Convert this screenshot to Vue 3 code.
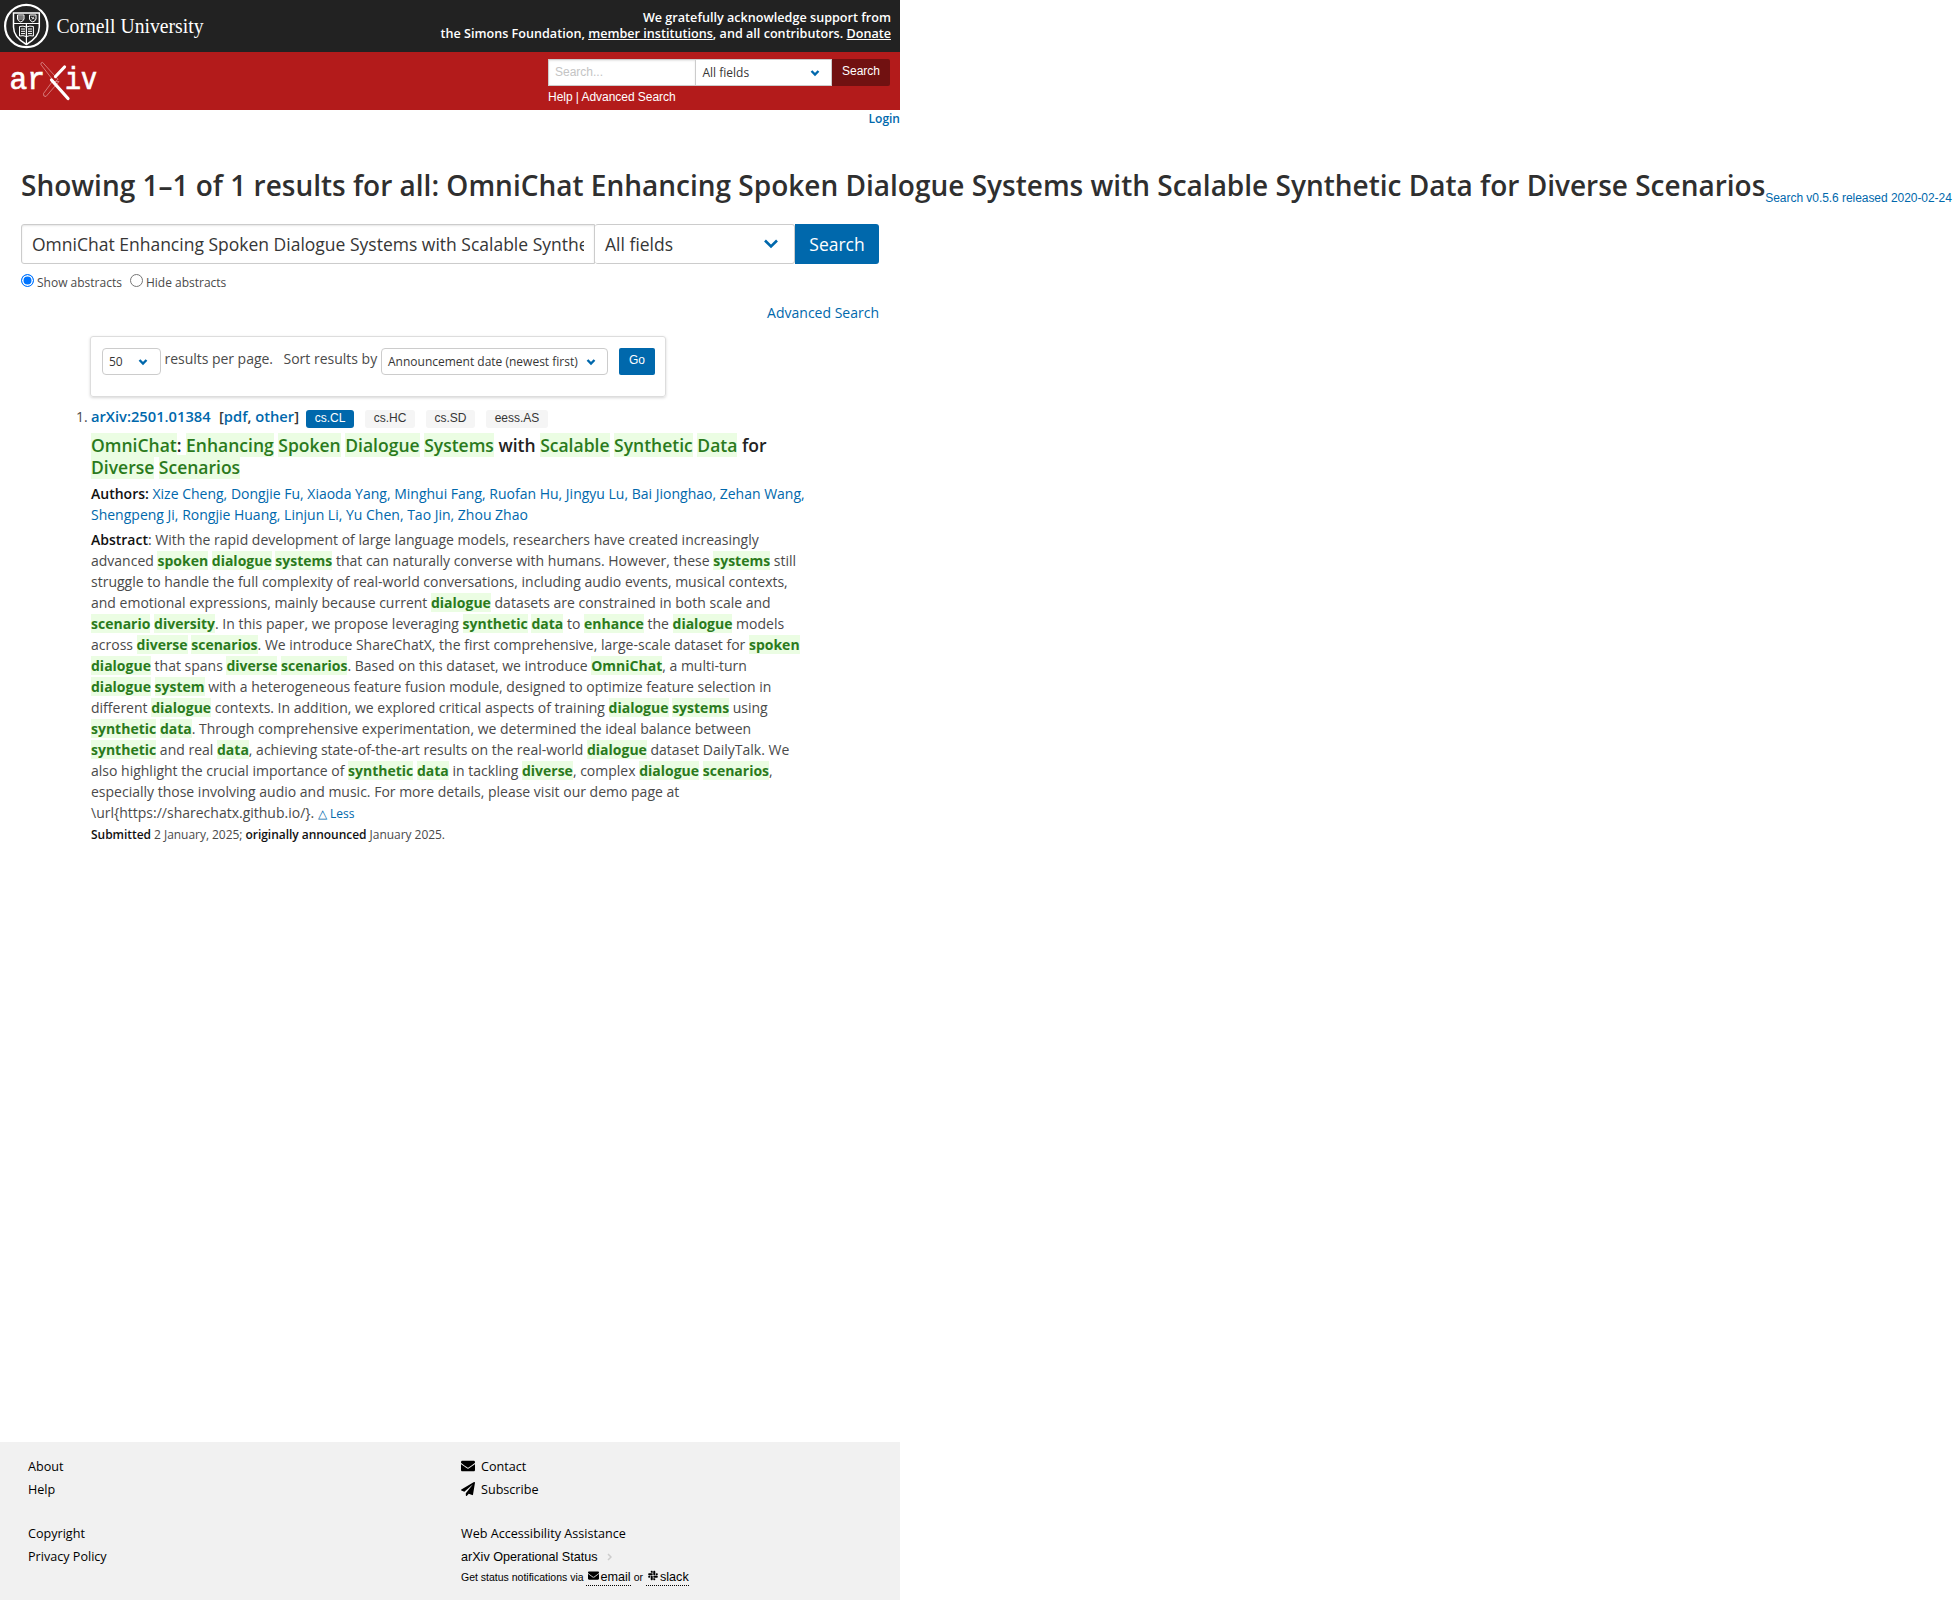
<script setup>
const parse = (line) =>
  line.split(/(\*[^*]+\*)/).filter(Boolean).map((t) =>
    t[0] === '*' ? { hit: true, text: t.slice(1, -1) } : { hit: false, text: t }
  )

// Words between asterisks are search hits.
const title = [
  '*OmniChat*: *Enhancing* *Spoken* *Dialogue* *Systems* with *Scalable* *Synthetic* *Data* for',
  '*Diverse* *Scenarios*',
].map(parse)

const authors = [
  ['Xize Cheng', 'Dongjie Fu', 'Xiaoda Yang', 'Minghui Fang', 'Ruofan Hu', 'Jingyu Lu', 'Bai Jionghao', 'Zehan Wang'],
  ['Shengpeng Ji', 'Rongjie Huang', 'Linjun Li', 'Yu Chen', 'Tao Jin', 'Zhou Zhao'],
]

const abstract = [
  ': With the rapid development of large language models, researchers have created increasingly',
  'advanced *spoken* *dialogue* *systems* that can naturally converse with humans. However, these *systems* still',
  'struggle to handle the full complexity of real-world conversations, including audio events, musical contexts,',
  'and emotional expressions, mainly because current *dialogue* datasets are constrained in both scale and',
  '*scenario* *diversity*. In this paper, we propose leveraging *synthetic* *data* to *enhance* the *dialogue* models',
  'across *diverse* *scenarios*. We introduce ShareChatX, the first comprehensive, large-scale dataset for *spoken*',
  '*dialogue* that spans *diverse* *scenarios*. Based on this dataset, we introduce *OmniChat*, a multi-turn',
  '*dialogue* *system* with a heterogeneous feature fusion module, designed to optimize feature selection in',
  'different *dialogue* contexts. In addition, we explored critical aspects of training *dialogue* *systems* using',
  '*synthetic* *data*. Through comprehensive experimentation, we determined the ideal balance between',
  '*synthetic* and real *data*, achieving state-of-the-art results on the real-world *dialogue* dataset DailyTalk. We',
  'also highlight the crucial importance of *synthetic* *data* in tackling *diverse*, complex *dialogue* *scenarios*,',
  'especially those involving audio and music. For more details, please visit our demo page at',
  '\\url{https://sharechatx.github.io/}. ',
].map(parse)

const tags = ['cs.CL', 'cs.HC', 'cs.SD', 'eess.AS']
</script>

<template>
  <div class="page">
    <header>
      <div class="cornell">
        <svg class="seal" width="210" height="52" viewBox="0 0 210 52">
          <circle cx="26.300" cy="26" r="21.200" fill="none" stroke="#fff" stroke-width="2.200" />
          <path d="M13.500 13h25.800v14c0 8-5 13-12.900 17.500C18.500 40 13.500 35 13.500 27z" fill="none" stroke="#fff" stroke-width="1.500" />
          <path d="M13.500 23.500h25.800M26.400 24v20" stroke="#fff" stroke-width="1.200" />
          <path d="M17.500 15h6.500v4q-.5 2-3.200 3-2.800-1-3.300-3zM29.500 15h6.500v4q-.5 2-3.200 3-2.800-1-3.300-3z" fill="none" stroke="#fff" />
          <path d="M18 17h5.500M18 19h5.500M31 17l3.500 2M34 16.500l-2 3" stroke="#fff" stroke-width=".8" />
          <path d="M19.500 26.500q3.500-1 6.900.5 3.400-1.500 7-.5v9.500q-3.600-1-7 .6-3.400-1.600-6.900-.6z" fill="none" stroke="#fff" />
          <path d="M21 29h4M21 31.300h4M21 33.600h4M28 29h4M28 31.300h4M28 33.600h4" stroke="#fff" />
          <text x="56.500" y="33" textLength="147" lengthAdjust="spacingAndGlyphs" class="wordmark">Cornell University</text>
        </svg>
        <div class="support">
          <span>We gratefully acknowledge support from</span><br>
          <span>the Simons Foundation, <a>member institutions</a>, and all contributors. <a>Donate</a></span>
        </div>
      </div>
      <div class="banner">
        <svg class="logo" width="100" height="58" viewBox="0 52 100 58">
          <g class="logo-text">
            <text x="9.500" y="88.500" textLength="35.500" lengthAdjust="spacingAndGlyphs">ar</text>
            <text x="65" y="88.500" textLength="32" lengthAdjust="spacingAndGlyphs">iv</text>
          </g>
          <path d="M42.500 62.300q-2.300.4-1.500 2.400l13.500 17.500 3.500-2.800zM52 82l-8.500 11.500q-.5 3.500 2.500 3l13-15z" fill="none" stroke="#e3a0a0" stroke-width=".7" />
          <path d="M64.500 67l-9 9.500M51.500 80l16.500 18.500" fill="none" stroke="#fff" stroke-width="3.200" stroke-linecap="round" />
        </svg>
        <div class="mini">
          <div class="mini-row">
            <div class="mini-input">Search...</div>
            <div class="mini-select"><span>All fields</span>
              <svg width="10" height="8" viewBox="0 0 10 8"><path d="M1.500 2l3.500 3.500L8.500 2" /></svg>
            </div>
            <div class="mini-btn">Search</div>
          </div>
          <div class="help">Help | Advanced Search</div>
        </div>
      </div>
    </header>
    <div class="login">Login</div>

    <main>
      <div class="heading">
        <h1>Showing 1–1 of 1 results for all: OmniChat Enhancing Spoken Dialogue Systems with Scalable Synthetic Data for Diverse Scenarios</h1>
        <a class="version">Search v0.5.6 released 2020-02-24</a>
      </div>
      <div class="searchbar">
        <div class="query"><div class="clip">OmniChat Enhancing Spoken Dialogue Systems with Scalable Synthetic Data for Diverse Scenarios</div></div>
        <div class="field"><span>All fields</span>
          <svg width="16" height="12" viewBox="0 0 16 12"><path d="M2 2.500l6 6 6-6" /></svg>
        </div>
        <div class="go-search">Search</div>
      </div>
      <div class="radios">
        <i class="radio on"></i><span class="show">Show abstracts</span>
        <i class="radio"></i><span>Hide abstracts</span>
      </div>
      <div class="advanced"><a>Advanced Search</a></div>

      <div class="box">
        <div class="sel sel-count"><span>50</span>
          <svg width="10" height="8" viewBox="0 0 10 8"><path d="M1.500 2l3.500 3.500L8.500 2" /></svg></div>
        <span class="per-page">results per page.</span>
        <span class="sort-by">Sort results by</span>
        <div class="sel sel-sort"><span>Announcement date (newest first)</span>
          <svg width="10" height="8" viewBox="0 0 10 8"><path d="M1.500 2l3.500 3.500L8.500 2" /></svg></div>
        <div class="go">Go</div>
      </div>

      <article>
        <div class="idrow">
          <span class="num">1.</span>
          <a class="id">arXiv:2501.01384</a>
          <span class="fmt">[<a>pdf</a>, <a>other</a>]</span>
          <span class="tags"><span v-for="(t, i) in tags" :key="t" class="tag" :class="{ primary: i === 0 }">{{ t }}</span></span>
        </div>
        <div class="title">
          <div v-for="(l, i) in title" :key="i"><template v-for="(s, j) in l" :key="j"><mark v-if="s.hit">{{ s.text }}</mark><template v-else>{{ s.text }}</template></template></div>
        </div>
        <div class="authors">
          <div v-for="(row, i) in authors" :key="i"><b v-if="i === 0">Authors:</b>{{ i === 0 ? ' ' : '' }}<template v-for="(a, j) in row" :key="a"><a>{{ a }}</a>{{ j < row.length - 1 ? ', ' : i === 0 ? ',' : '' }}</template></div>
        </div>
        <div class="abstract">
          <div v-for="(l, i) in abstract" :key="i"><b v-if="i === 0">Abstract</b><template v-for="(s, j) in l" :key="j"><mark v-if="s.hit">{{ s.text }}</mark><template v-else>{{ s.text }}</template></template><a v-if="i === 13" class="less">△ Less</a></div>
        </div>
        <p class="submitted"><b>Submitted</b> 2 January, 2025; <b>originally announced</b> January 2025.</p>
      </article>
    </main>

    <footer>
      <div class="col left">
        <div>About</div>
        <div>Help</div>
        <div class="gap">Copyright</div>
        <div>Privacy Policy</div>
      </div>
      <div class="col right">
        <div><svg class="ico" width="14" height="14" viewBox="0 0 512 512"><path d="M502.300 190.800c3.900-3.100 9.700-.2 9.700 4.700V400c0 26.500-21.500 48-48 48H48c-26.500 0-48-21.500-48-48V195.600c0-5 5.700-7.800 9.700-4.700 22.400 17.400 52.100 39.500 154.100 113.600 21.100 15.400 56.700 47.800 92.200 47.600 35.700.3 72-32.800 92.300-47.600 102-74.100 131.600-96.300 154-113.700zM256 320c23.200.4 56.600-29.200 73.400-41.400 132.700-96.300 142.800-104.700 173.400-128.700 5.800-4.500 9.200-11.500 9.200-18.900v-19c0-26.500-21.500-48-48-48H48c-26.500 0-48 21.500-48 48v19c0 7.400 3.400 14.300 9.200 18.900 30.600 23.900 40.700 32.400 173.400 128.700 16.800 12.200 50.200 41.800 73.400 41.400z" /></svg>Contact</div>
        <div><svg class="ico" width="14" height="14" viewBox="0 0 512 512"><path d="M476 3.200L12.500 270.600c-18.100 10.400-15.800 35.600 2.200 43.200L121 358.400l287.300-253.200c5.500-4.900 13.300 2.600 8.600 8.300L176 407v80.500c0 23.600 28.500 32.900 42.500 15.800L282 426l124.600 52.200c14.200 6 30.400-2.900 33-18.200l72-432C515 7.800 493.300-6.800 476 3.200z" /></svg>Subscribe</div>
        <div class="gap">Web Accessibility Assistance</div>
        <div class="status">arXiv Operational Status<svg width="5" height="8" viewBox="0 0 5 8"><path d="M1 1l3 3-3 3" /></svg></div>
        <div class="notify"><span>Get status notifications via</span>
          <a class="email"><svg width="11" height="11" viewBox="0 0 512 512"><path d="M502.300 190.800c3.900-3.100 9.700-.2 9.700 4.700V400c0 26.500-21.500 48-48 48H48c-26.500 0-48-21.500-48-48V195.600c0-5 5.700-7.800 9.700-4.700 22.400 17.400 52.100 39.500 154.100 113.600 21.100 15.400 56.700 47.800 92.200 47.600 35.700.3 72-32.800 92.300-47.600 102-74.100 131.600-96.300 154-113.700zM256 320c23.200.4 56.600-29.200 73.400-41.400 132.700-96.300 142.800-104.700 173.400-128.700 5.800-4.500 9.200-11.500 9.200-18.900v-19c0-26.500-21.500-48-48-48H48c-26.500 0-48 21.500-48 48v19c0 7.400 3.400 14.300 9.200 18.900 30.600 23.900 40.700 32.400 173.400 128.700 16.800 12.200 50.200 41.800 73.400 41.400z" /></svg>email</a>
          <span class="or">or</span>
          <a><svg width="10" height="11" viewBox="0 0 448 512"><path d="M94.100 315.100c0 25.900-21.200 47.100-47.100 47.100S0 341 0 315.100 21.200 268 47.100 268h47zm23.700 0c0-25.900 21.200-47.100 47.100-47.100s47.100 21.200 47.100 47.100v117.800c0 25.900-21.200 47.100-47.100 47.100s-47.100-21.200-47.100-47.100zm47.100-189c-25.900 0-47.100-21.200-47.100-47.100S139 32 164.900 32 212 53.200 212 79.100v47zm0 23.700c25.900 0 47.100 21.200 47.100 47.100S190.800 244 164.900 244H47.100C21.200 244 0 222.800 0 196.900s21.200-47.100 47.100-47.100zm189 47.100c0-25.900 21.200-47.100 47.100-47.100s47 21.200 47 47.100-21.200 47.100-47.100 47.100h-47zm-23.700 0c0 25.900-21.200 47.100-47.100 47.100S236 222.800 236 196.900V79.100C236 53.200 257.200 32 283.100 32s47.100 21.200 47.100 47.100zm-47.100 189c25.900 0 47.100 21.200 47.100 47.100S309 480 283.100 480 236 458.800 236 432.900v-47zm0-23.700c-25.900 0-47.100-21.200-47.100-47.100s21.200-47.100 47.100-47.100h117.800c25.900 0 47.100 21.200 47.100 47.100s-21.200 47.100-47.100 47.100z" /></svg>slack</a>
        </div>
      </div>
    </footer>
  </div>
</template>

<style>
body { margin: 0; background: #fff; overflow: hidden; }
</style>

<style scoped>
.page { width: 900px; height: 1600px; display: flex; flex-direction: column; font: 14px/21px "Open Sans", sans-serif; color: #4a4a4a; white-space: nowrap; }
a { color: #0068ac; }
.cornell { height: 52px; background: #222; display: flex; justify-content: space-between; }
.seal, .logo { display: block; }
.wordmark { font: 20px "Liberation Serif", serif; fill: #fff; }
.support { padding: 10px 9px 0 0; text-align: right; color: #fff; font-size: 12.600px; line-height: 16px; font-weight: 600; letter-spacing: .01px; }
.support a { color: #fff; text-decoration: underline; }
.banner { height: 58px; background: #b31b1b; display: flex; justify-content: space-between; }
.logo-text { font: 31px "Liberation Mono", monospace; fill: #fff; stroke: #fff; stroke-width: .7; }
.mini { width: 342px; padding: 7px 10px 0 0; }
.mini-row { display: flex; height: 27px; font-size: 12px; line-height: 25px; }
.mini-input { box-sizing: border-box; width: 148px; background: #fff; border: 1px solid #ccc; padding-left: 6px; color: #c4c4c4; font-family: "Liberation Sans", sans-serif; box-shadow: inset 0 1px 2px rgba(10,10,10,.1); }
.mini-select { box-sizing: border-box; width: 136px; background: #fff; border: 1px solid #ccc; border-left: 0; padding: 0 11px 0 6.500px; color: #363636; display: flex; justify-content: space-between; align-items: center; }
.mini-btn { width: 58px; background: #711111; color: #fff; text-align: center; line-height: 24px; font-family: "Liberation Sans", sans-serif; border-radius: 0 2px 2px 0; }
.help { color: #fff; font: 12px/18px "Liberation Sans", sans-serif; padding-top: 2px; letter-spacing: -.04px; }
.mini-select svg path, .sel svg path { fill: none; stroke: #0068ac; stroke-width: 2.400; }
.field svg path { fill: none; stroke: #0068ac; stroke-width: 2.600; }
.login { height: 18px; font-size: 12px; line-height: 18px; font-weight: 600; color: #0068ac; text-align: right; }
main { flex: 1; display: flex; flex-direction: column; }
.heading { height: 96px; box-sizing: border-box; padding: 41px 0 0 21px; display: flex; width: 1958px; }
h1 { margin: 0; font-size: 28px; line-height: 32px; font-weight: 600; color: #2f2f2f; }
.version { font: 12px/16px "Liberation Sans", sans-serif; padding-top: 21px; letter-spacing: -.05px; }
.searchbar { margin-left: 21px; width: 858px; height: 40px; display: flex; font-size: 17.500px; line-height: 38px; color: #363636; }
.query { box-sizing: border-box; width: 574px; border: 1px solid #ccc; border-radius: 3px 0 0 3px; padding: 0 10px; box-shadow: inset 0 1px 2px rgba(10,10,10,.1); }
.clip { overflow: hidden; }
.field { box-sizing: border-box; width: 200px; border: 1px solid #ccc; border-left: 0; border-radius: 3px; padding: 0 15px 0 10px; display: flex; justify-content: space-between; align-items: center; }
.go-search { width: 84px; background: #0068ac; color: #fff; text-align: center; border-radius: 0 3px 3px 0; line-height: 40px; }
.radios { margin: 10px 0 0 21px; height: 18px; display: flex; font-size: 12px; line-height: 18px; }
.radio { box-sizing: border-box; width: 13px; height: 13px; border: 1px solid #767676; border-radius: 50%; margin-right: 3px; }
.radio.on { border-color: #0075ff; background: #0075ff; box-shadow: inset 0 0 0 1.500px #fff; }
.show { margin-right: 8px; }
.advanced { margin-top: 10px; width: 879px; text-align: right; }
.box { box-sizing: border-box; margin: 13px 0 0 90px; width: 576px; height: 61px; border: 1px solid #ddd; border-radius: 3px; box-shadow: 0 1px 3px rgba(0,0,0,.16); padding: 11px; display: flex; }
.box > * { flex: none; }
.sel { box-sizing: border-box; height: 27px; border: 1px solid #ccc; border-radius: 4px; font-size: 12px; line-height: 25px; color: #363636; display: flex; justify-content: space-between; align-items: center; padding: 0 12px 0 6px; }
.sel-count { width: 59px; }
.sel-sort { width: 227px; padding-right: 11px; }
.per-page { margin-left: 3.500px; width: 119px; letter-spacing: -.03px; }
.sort-by { width: 97.500px; }
.go { width: 36px; height: 27px; margin-left: 11px; background: #0068ac; border-radius: 2px; color: #fff; text-align: center; font: 12px/24px "Liberation Sans", sans-serif; }
article { margin: 9px 0 0 91px; }
.idrow { display: flex; height: 28px; }
.num { margin-left: -15px; width: 15px; }
.id { font-size: 14.700px; font-weight: 600; width: 128px; }
.fmt { font-size: 14.700px; font-weight: 600; color: #363636; width: 87px; }
.tags { display: flex; padding-top: 4px; gap: 11px; }
.tag { box-sizing: border-box; width: 49px; height: 18px; border-radius: 3px; background: #f5f5f5; color: #363636; font: 12px/16px "Liberation Sans", sans-serif; text-align: center; }
.tag.primary { width: 48px; background: #0068ac; color: #fff; }
.tag:nth-child(2) { width: 50px; }
.tag:nth-child(4) { width: 62px; }
.title { font-size: 17.500px; line-height: 22px; font-weight: 600; color: #222; }
mark { background: #ebfde3; color: #2a7a1c; }
.authors { margin-top: 5px; color: #0068ac; }
b { font-weight: 600; color: #111; }
.abstract { margin-top: 4px; }
.abstract mark { font-weight: 700; }
.less { font-size: 12px; }
.submitted { margin: 2px 0 0; font-size: 12px; line-height: 18px; letter-spacing: -.04px; }
footer { height: 158px; background: #f1f1f1; display: flex; color: #000; font-size: 12.600px; line-height: 23px; }
.col { padding-top: 13px; }
.left { width: 433px; padding-left: 28px; }
.gap { margin-top: 21px; }
.ico { margin-right: 6px; vertical-align: -2px; }
.status { font-family: "Liberation Sans", sans-serif; line-height: 23px; padding-top: 1px; }
.status svg { margin-left: 9px; }
.status path { fill: none; stroke: #ccc; stroke-width: 1.500; }
.notify { font: 10.500px/15px "Liberation Sans", sans-serif; display: flex; align-items: baseline; padding-top: 1px; }
.notify a { font-size: 12.600px; line-height: 15px; color: #000; border-bottom: 1px dotted #000; padding-left: 2px; }
.notify svg { margin-right: 2px; }
.notify .email { margin-left: 2px; }
.or { margin: 0 3px; }
</style>
